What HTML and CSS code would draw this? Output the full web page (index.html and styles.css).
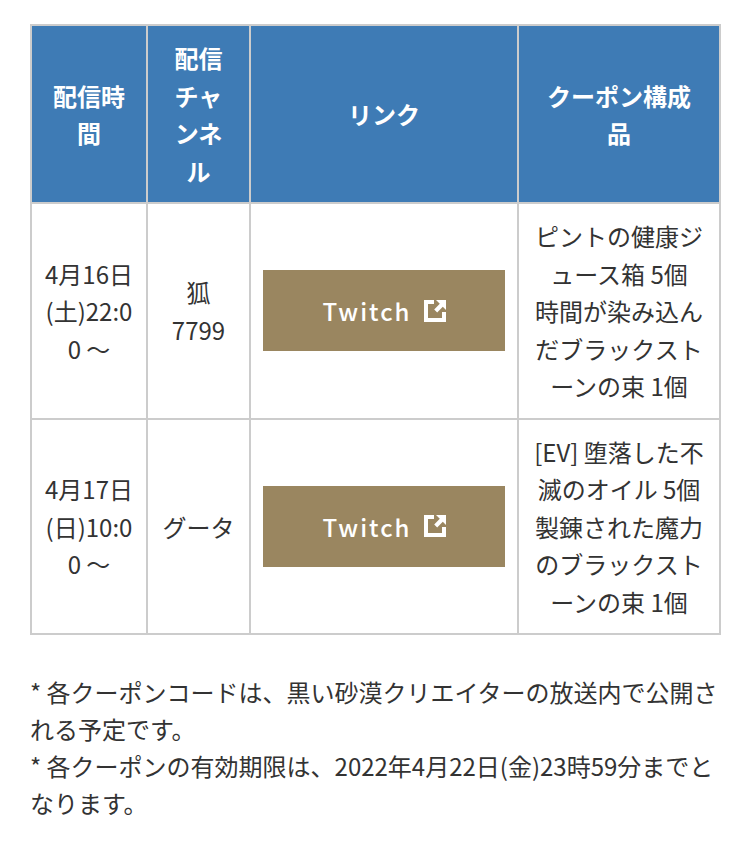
FILE: index.html
```html
<!DOCTYPE html>
<html lang="ja">
<head>
<meta charset="utf-8">
<link rel="stylesheet" href="styles.css">
</head>
<body>
<div class="page">
  <table class="schedule">
    <colgroup>
      <col class="c1"><col class="c2"><col class="c3"><col class="c4">
    </colgroup>
    <thead>
      <tr>
        <th>配信時間</th>
        <th>配信チャンネル</th>
        <th>リンク</th>
        <th>クーポン構成品</th>
      </tr>
    </thead>
    <tbody>
      <tr>
        <td class="date">4月16日(土)22:00 ～</td>
        <td class="channel">狐 7799</td>
        <td class="link"><a class="btn" href="#">Twitch <svg class="ext" viewBox="0 0 22 22" width="22" height="22"><path d="M10 0H0v22h22V12h-4v6H4V4h6z" fill="#fff"/><path d="M12 0h10v10l-3.2-3.2-5.6 5.6-3-3 5.6-5.6z" fill="#fff"/></svg></a></td>
        <td>ピントの健康ジュース箱 5個<br>時間が染み込んだブラックストーンの束 1個</td>
      </tr>
      <tr>
        <td class="date">4月17日(日)10:00 ～</td>
        <td class="channel">グータ</td>
        <td class="link"><a class="btn" href="#">Twitch <svg class="ext" viewBox="0 0 22 22" width="22" height="22"><path d="M10 0H0v22h22V12h-4v6H4V4h6z" fill="#fff"/><path d="M12 0h10v10l-3.2-3.2-5.6 5.6-3-3 5.6-5.6z" fill="#fff"/></svg></a></td>
        <td>[EV] 堕落した不滅のオイル 5個<br>製錬された魔力のブラックストーンの束 1個</td>
      </tr>
    </tbody>
  </table>
  <div class="notes">
    <p>* 各クーポンコードは、黒い砂漠クリエイターの放送内で公開される予定です。</p>
    <p>* 各クーポンの有効期限は、2022年4月22日(金)23時59分までとなります。</p>
  </div>
</div>
</body>
</html>
```
FILE: styles.css
```css
html, body {
  margin: 0;
  padding: 0;
  background: #fff;
}
body {
  font-family: "Noto Sans CJK JP", "Noto Sans", sans-serif;
  color: #333;
  font-size: 24px;
  line-height: 37.5px;
}
.page {
  padding: 24px 30px 0 30px;
}
.schedule {
  width: 690px;
  border-collapse: collapse;
  table-layout: fixed;
  border: 2px solid #cccccc;
}
.c1 { width: 116px; }
.c2 { width: 103px; }
.c3 { width: 268px; }
.c4 { width: 202px; }
.schedule th,
.schedule td {
  border: 2px solid #cccccc;
  text-align: center;
  vertical-align: middle;
  word-break: break-all;
}
.schedule th {
  padding: 13px 20px;
  background: #3e7bb5;
  color: #fff;
  font-weight: bold;
  line-height: 37.5px;
}
.schedule td {
  padding: 13px 12px;
}
.schedule td.channel {
  word-break: normal;
}
.btn {
  display: flex;
  align-items: center;
  justify-content: center;
  height: 81px;
  background: #9a8660;
  color: #fff;
  text-decoration: none;
  font-weight: 500;
  letter-spacing: 2px;
  font-size: 24px;
}
.ext {
  margin-left: 12px;
}
.notes {
  margin-top: 38px;
}
.notes p {
  margin: 0;
  line-height: 37px;
}
```
